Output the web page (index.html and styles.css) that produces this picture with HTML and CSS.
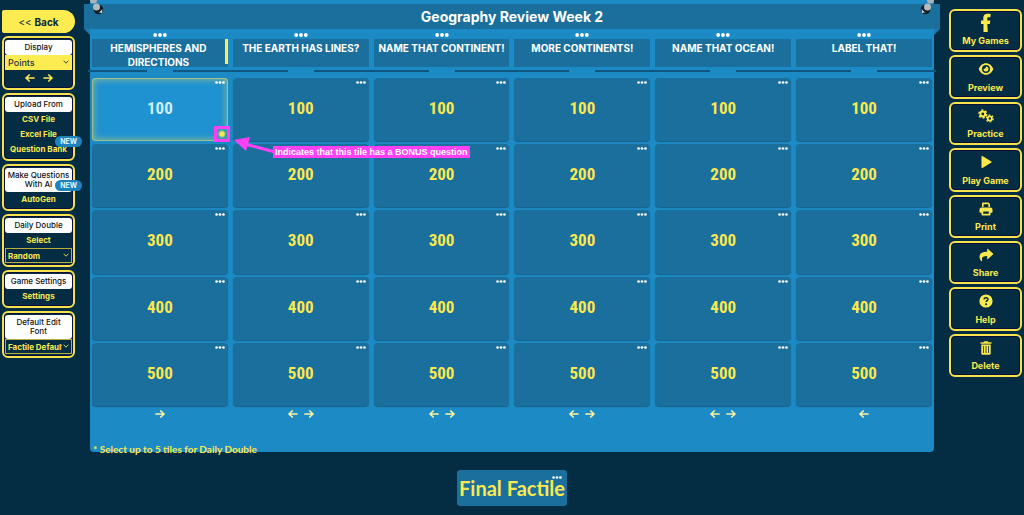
FILE: index.html
```html
<!DOCTYPE html>
<html lang="en">
<head>
<meta charset="utf-8">
<title>Geography Review Week 2</title>
<link rel="stylesheet" href="styles.css">
</head>
<body>
<svg class="defs" aria-hidden="true">
  <symbol id="right" viewBox="0 0 10 8"><path d="M1 4h8M5.800 1 9 4 5.800 7" fill="none" stroke="currentColor" stroke-width="1.700" stroke-linecap="round" stroke-linejoin="round"/></symbol>
  <symbol id="left" viewBox="0 0 10 8"><path d="M9 4H1M4.200 1 1 4l3.200 3" fill="none" stroke="currentColor" stroke-width="1.700" stroke-linecap="round" stroke-linejoin="round"/></symbol>
  <symbol id="chev" viewBox="0 0 6 4"><path d="M.6.7 3 3.200 5.400.7" fill="none" stroke="currentColor" stroke-width=".9"/></symbol>
  <symbol id="dots" viewBox="0 0 14 4"><circle cx="2.200" cy="2" r="1.900"/><circle cx="7" cy="2" r="1.900"/><circle cx="11.800" cy="2" r="1.900"/></symbol>
  <symbol id="bolt" viewBox="0 0 14 16"><circle cx="8.500" cy="9.500" r="4.800" fill="#111d24"/><path d="M9 12.500l3.500-3.500-.5 4z" fill="#c9ced0"/><circle cx="3.500" cy="0" r="3.600" fill="#a9b3b8"/><circle cx="6.500" cy="7" r="3.500" fill="#b2bbbf"/></symbol>
</svg>
<div class="app">
  <aside class="side">
    <button class="back">&lt;&lt; <b>Back</b></button>
    <section class="panel">
      <label class="head" for="display">Display</label>
      <div class="pick pick-solid"><select id="display"><option>Points</option></select><svg class="chev"><use href="#chev"/></svg></div>
      <div class="moves"><button aria-label="Back one"><svg class="arrow"><use href="#left"/></svg></button><button aria-label="Forward one"><svg class="arrow"><use href="#right"/></svg></button></div>
    </section>
    <section class="panel">
      <h2 class="head">Upload From</h2>
      <a class="item" href="#">CSV File</a>
      <a class="item" href="#">Excel File</a>
      <a class="item" href="#">Question Bank<span class="new">NEW</span></a>
    </section>
    <section class="panel">
      <h2 class="head">Make Questions<br>With AI<span class="new">NEW</span></h2>
      <a class="item" href="#">AutoGen</a>
    </section>
    <section class="panel">
      <label class="head" for="daily">Daily Double</label>
      <a class="item" href="#">Select</a>
      <div class="pick"><select id="daily"><option>Random</option></select><svg class="chev"><use href="#chev"/></svg></div>
    </section>
    <section class="panel">
      <h2 class="head">Game Settings</h2>
      <a class="item" href="#">Settings</a>
    </section>
    <section class="panel">
      <label class="head" for="font">Default Edit<br>Font</label>
      <div class="pick"><select id="font"><option>Factile Default</option></select><svg class="chev"><use href="#chev"/></svg></div>
    </section>
  </aside>

  <main class="main">
    <div class="board">
      <header class="title">
        <svg class="bolt bolt-l"><use href="#bolt"/></svg>
        <h1>Geography Review Week 2</h1>
        <svg class="bolt bolt-r"><use href="#bolt"/></svg>
      </header>
      <div class="cols cats">
        <div class="cat"><svg class="dots"><use href="#dots"/></svg><h3 class="mark">HEMISPHERES AND DIRECTIONS</h3></div>
        <div class="cat"><svg class="dots"><use href="#dots"/></svg><h3>THE EARTH HAS LINES?</h3></div>
        <div class="cat"><svg class="dots"><use href="#dots"/></svg><h3>NAME THAT CONTINENT!</h3></div>
        <div class="cat"><svg class="dots"><use href="#dots"/></svg><h3>MORE CONTINENTS!</h3></div>
        <div class="cat"><svg class="dots"><use href="#dots"/></svg><h3>NAME THAT OCEAN!</h3></div>
        <div class="cat"><svg class="dots"><use href="#dots"/></svg><h3>LABEL THAT!</h3></div>
      </div>
      <div class="cols rail"><i></i><i></i><i></i><i></i><i></i><i></i></div>
      <div class="cols tiles">
        <div class="cell">
          <button class="tile lit">100<svg class="more"><use href="#dots"/></svg></button>
          <span class="bonus"></span>
          <svg class="pointer" viewBox="0 0 44 18"><path d="M12 7 42 15" stroke="#ff40f5" stroke-width="3"/><path d="M1 3 17 0 13 14z" fill="#ff40f5"/></svg>
          <span class="hint">Indicates that this tile has a BONUS question</span>
        </div>
        <button class="tile">100<svg class="more"><use href="#dots"/></svg></button>
        <button class="tile">100<svg class="more"><use href="#dots"/></svg></button>
        <button class="tile">100<svg class="more"><use href="#dots"/></svg></button>
        <button class="tile">100<svg class="more"><use href="#dots"/></svg></button>
        <button class="tile">100<svg class="more"><use href="#dots"/></svg></button>
        <button class="tile">200<svg class="more"><use href="#dots"/></svg></button>
        <button class="tile">200<svg class="more"><use href="#dots"/></svg></button>
        <button class="tile">200<svg class="more"><use href="#dots"/></svg></button>
        <button class="tile">200<svg class="more"><use href="#dots"/></svg></button>
        <button class="tile">200<svg class="more"><use href="#dots"/></svg></button>
        <button class="tile">200<svg class="more"><use href="#dots"/></svg></button>
        <button class="tile">300<svg class="more"><use href="#dots"/></svg></button>
        <button class="tile">300<svg class="more"><use href="#dots"/></svg></button>
        <button class="tile">300<svg class="more"><use href="#dots"/></svg></button>
        <button class="tile">300<svg class="more"><use href="#dots"/></svg></button>
        <button class="tile">300<svg class="more"><use href="#dots"/></svg></button>
        <button class="tile">300<svg class="more"><use href="#dots"/></svg></button>
        <button class="tile">400<svg class="more"><use href="#dots"/></svg></button>
        <button class="tile">400<svg class="more"><use href="#dots"/></svg></button>
        <button class="tile">400<svg class="more"><use href="#dots"/></svg></button>
        <button class="tile">400<svg class="more"><use href="#dots"/></svg></button>
        <button class="tile">400<svg class="more"><use href="#dots"/></svg></button>
        <button class="tile">400<svg class="more"><use href="#dots"/></svg></button>
        <button class="tile">500<svg class="more"><use href="#dots"/></svg></button>
        <button class="tile">500<svg class="more"><use href="#dots"/></svg></button>
        <button class="tile">500<svg class="more"><use href="#dots"/></svg></button>
        <button class="tile">500<svg class="more"><use href="#dots"/></svg></button>
        <button class="tile">500<svg class="more"><use href="#dots"/></svg></button>
        <button class="tile">500<svg class="more"><use href="#dots"/></svg></button>
      </div>
      <div class="cols shift">
        <div class="moves"><button aria-label="Move right"><svg class="arrow"><use href="#right"/></svg></button></div>
        <div class="moves"><button aria-label="Move left"><svg class="arrow"><use href="#left"/></svg></button><button aria-label="Move right"><svg class="arrow"><use href="#right"/></svg></button></div>
        <div class="moves"><button aria-label="Move left"><svg class="arrow"><use href="#left"/></svg></button><button aria-label="Move right"><svg class="arrow"><use href="#right"/></svg></button></div>
        <div class="moves"><button aria-label="Move left"><svg class="arrow"><use href="#left"/></svg></button><button aria-label="Move right"><svg class="arrow"><use href="#right"/></svg></button></div>
        <div class="moves"><button aria-label="Move left"><svg class="arrow"><use href="#left"/></svg></button><button aria-label="Move right"><svg class="arrow"><use href="#right"/></svg></button></div>
        <div class="moves"><button aria-label="Move left"><svg class="arrow"><use href="#left"/></svg></button></div>
      </div>
    </div>
    <p class="note">* Select up to 5 tiles for Daily Double</p>
    <button class="final">Final Factile<svg class="more"><use href="#dots"/></svg></button>
  </main>

  <nav class="tools">
    <button class="tool"><svg class="fb" viewBox="0 0 12 20"><path d="M3.500 19V11H1V7.500h2.300V5C3.300 2 5 .8 7.400.8c1.200 0 2.600.1 3.300.3l-.4 3.200H8.600c-1 0-1.300.5-1.300 1.300v1.900h3L9.900 11H7.300l.5 8z"/></svg>My Games</button>
    <button class="tool"><svg viewBox="0 0 16 14"><path fill-rule="evenodd" d="M8 1.200C4.500 1.200 2 3.600.7 7c1.300 3.400 3.800 5.800 7.300 5.800s6-2.400 7.300-5.800C14 3.600 11.500 1.200 8 1.200zM8 3a4 4 0 1 1 0 8 4 4 0 0 1 0-8zm0 1.500c0 1.500-1 2.500-2.500 2.500A2.500 2.500 0 1 0 8 4.500z"/></svg>Preview</button>
    <button class="tool"><svg viewBox="0 0 16 14"><g fill="none" stroke="currentColor"><circle cx="4.800" cy="5" r="2.400" stroke-width="2"/><circle cx="4.800" cy="5" r="3.900" stroke-width="1.500" stroke-dasharray="2.100 1.980"/><circle cx="11.800" cy="9.500" r="2.100" stroke-width="1.800"/><circle cx="11.800" cy="9.500" r="3.400" stroke-width="1.300" stroke-dasharray="1.800 1.760"/></g></svg>Practice</button>
    <button class="tool"><svg viewBox="0 0 16 14"><path d="M3.500 1.500v11q0 .9.900.4l9-5.300q.7-.6 0-1.200l-9-5.300q-.9-.5-.9.400z"/></svg>Play Game</button>
    <button class="tool"><svg viewBox="0 0 16 14"><path fill-rule="evenodd" d="M4 1.500Q4 .5 5 .5h5.500L12 2v3h-1.600V2.300H5.600V5H4zM3.500 5.500h9q2 0 2 2V10q0 .7-.7.7H12.500V12.500q0 1-1 1h-7q-1 0-1-1V10.700H2.200q-.7 0-.7-.7V7.500q0-2 2-2zM5.200 9.500v2.300h5.600V9.500z"/></svg>Print</button>
    <button class="tool"><svg viewBox="0 0 16 14"><path d="M9.200 1.200v2.600C4.500 3.800 1.500 5.300 1.500 9c0 1.800 1 3.400 2 4.200.5.300.9 0 .7-.5C3.300 9.300 5 8.100 9.200 8.100v2.700q.1.800.8.3l5-4.600q.4-.5 0-.9L10 .9q-.7-.5-.8.300z"/></svg>Share</button>
    <button class="tool"><svg viewBox="0 0 16 14"><circle cx="8" cy="7" r="6.600"/><path d="M5.900 5.400Q6.200 3.700 8 3.700t2 1.500c0 1.500-1.900 1.500-1.900 2.900" fill="none" stroke="#042c42" stroke-width="1.500"/><circle cx="8.100" cy="10.300" r="1" fill="#042c42"/></svg>Help</button>
    <button class="tool"><svg viewBox="0 0 16 14"><path fill-rule="evenodd" d="M2.500 1.200h3L6.200.3h3.600l.7.9h3v1.500h-11zM3.300 3.400h9.400V12.500q0 1.300-1.300 1.300H4.600q-1.300 0-1.300-1.300zM5.100 5v7h.8V5zm2.500 0v7h.8V5zm2.500 0v7h.8V5z"/></svg>Delete</button>
  </nav>
</div>
</body>
</html>
```
FILE: styles.css
```css
* { box-sizing: border-box; }
body {
  margin: 0;
  min-height: 100vh;
  background: #042c42;
  color: #fbe84f;
  font-family: Inter, "Open Sans", sans-serif;
  font-size: 9px;
}
button, select { font: inherit; color: inherit; margin: 0; }
button { padding: 0; border: 0; background: none; cursor: pointer; }
h1, h2, h3, p { margin: 0; }
a { color: inherit; text-decoration: none; }
svg { fill: currentColor; display: block; }
.defs { position: absolute; width: 0; height: 0; }

.app { display: flex; gap: 15px; padding: 0 2px; }
.side { flex: 0 0 73px; display: flex; flex-direction: column; gap: 3px; padding-top: 10px; }
.back {
  height: 23px;
  background: #fdeb52;
  color: #06273a;
  border-radius: 2px 12px 12px 2px;
  font-size: 10px;
}
.panel {
  border: 2px solid #f5e24d;
  border-radius: 6px;
  padding: 2px 1px;
  display: flex;
  flex-direction: column;
  text-align: center;
  box-shadow: inset 0 0 0 1px #0b1038;
}
.head {
  position: relative;
  background: #fff;
  color: #111;
  border-radius: 3px;
  font-size: 8px;
  font-weight: 500;
  line-height: 9px;
  padding: 3px 0;
}
.item { position: relative; line-height: 15px; font-weight: 700; font-size: 8px; }
.new {
  position: absolute;
  right: -10px;
  bottom: 1px;
  background: #1c83bd;
  color: #e9f6fd;
  border-radius: 6px;
  padding: 0 5px;
  font-size: 7px;
  font-weight: 700;
  line-height: 11px;
}
.item .new { bottom: 10px; }
.pick { position: relative; height: 15px; border: 1px solid #b9ad3c; font-weight: 700; font-size: 8px; }
.pick-solid { background: #fdeb52; color: #1d3440; border-color: #fdeb52; font-weight: 500; font-size: 9px; }
.pick select {
  display: block;
  appearance: none;
  width: 100%;
  height: 100%;
  border: 0;
  padding: 0 9px 0 2px;
  background: none;
}
.chev { position: absolute; right: 2px; top: 4px; width: 6px; height: 4px; }
.moves { display: flex; justify-content: center; align-items: center; gap: 8px; height: 16px; }
.shift .moves { gap: 6px; }
.arrow { width: 10px; height: 8px; }

.main { flex: 1; min-width: 0; display: flex; flex-direction: column; }
.board { background: #1c8ac4; border-radius: 0 0 4px 4px; padding: 4px 2px 30px; }
.title {
  position: relative;
  margin: 0 -8px;
  background: #1a6f9d;
  color: #fff;
  text-align: center;
}
.title h1 { font-size: 14px; line-height: 25px; font-weight: 700; }
.title::before, .title::after {
  content: "";
  position: absolute;
  top: 100%;
  width: 6px;
  height: 6px;
  background: #1b79ad;
}
.title::before { left: 0; clip-path: polygon(0 0, 100% 0, 100% 100%); }
.title::after { right: 0; clip-path: polygon(0 0, 100% 0, 0 100%); }
.bolt { position: absolute; top: -4px; width: 14px; height: 16px; }
.bolt-l { left: 6px; }
.bolt-r { right: 6px; transform: scaleX(-1); }

.cols { display: grid; grid-template-columns: repeat(6, minmax(0, 1fr)); gap: 3px 5px; }
.cats { padding-top: 4px; color: #fff; }
.cat { display: flex; flex-direction: column; align-items: center; gap: 2px; }
.dots { width: 14px; height: 4px; }
.cat h3 {
  width: 100%;
  height: 28px;
  padding: 2px 0 0;
  background: #1a6f9d;
  font-size: 10px;
  line-height: 14px;
  font-weight: 700;
  text-align: center;
}
.cat .mark { padding: 2px 15px 0 12px; background: linear-gradient(#fdeb52, #fdeb52) right top / 3px 25px no-repeat #1a6f9d; }
.rail { margin: 3px -4px 6px; padding: 0 4px; height: 2px; background: #0f5680; }
.rail i { justify-self: center; width: 26px; height: 2px; background: #1c8ac4; }
.tiles { grid-auto-rows: 1fr; min-height: 328px; }
.cell { position: relative; display: grid; }
.tile {
  position: relative;
  padding-bottom: 3px;
  background: #1a6f9d;
  border-radius: 4px;
  box-shadow: 0 1px 1px #17618a;
  font-family: "Liberation Sans Narrow", "Roboto Condensed", "DejaVu Sans Condensed", sans-serif;
  font-size: 17px;
  font-weight: 700;
}
.lit { background: #1f92d1; color: #cfeefb; box-shadow: inset 0 0 0 1px #9bc28a, inset 0 0 6px 2px #7db59b; }
.more { position: absolute; top: 3px; right: 3px; width: 10px; height: 3px; color: #fff; }
.bonus {
  position: absolute;
  right: -2px;
  bottom: -1px;
  width: 16px;
  height: 16px;
  border: 3px solid #ff40f5;
  background: radial-gradient(circle, #f4e94f 2px, #3a9db0 4px);
}
.pointer { position: absolute; z-index: 1; left: 141px; top: 59px; width: 44px; height: 18px; }
.hint {
  position: absolute;
  z-index: 1;
  left: 181px;
  top: 68px;
  padding: 0 2px;
  background: #ff40f5;
  color: #fff;
  font-family: "Liberation Sans", Arial, sans-serif;
  font-weight: 700;
  font-size: 9px;
  line-height: 12px;
  white-space: nowrap;
}
.shift { color: #fdf2a0; }
.note { margin: -10px 0 0 3px; font-family: Lato, sans-serif; font-size: 10px; line-height: 14px; font-weight: 700; }
.final {
  position: relative;
  align-self: center;
  margin-top: 14px;
  padding: 0 2px;
  background: #1a6f9d;
  border-radius: 3px;
  font-family: Lato, sans-serif;
  font-size: 20px;
  line-height: 36px;
  font-weight: 700;
}
.final .more { top: 6px; right: 5px; }

.tools { flex: 0 0 73px; display: grid; grid-auto-rows: 1fr; align-self: flex-start; gap: 3px; min-height: 368px; margin-top: 9px; }
.tool {
  display: flex;
  flex-direction: column;
  align-items: center;
  justify-content: space-between;
  border: 2px solid #f5e24d;
  border-radius: 6px;
  padding: 5px 0 3px;
  box-shadow: inset 0 0 0 1px #0b1038;
  font-weight: 700;
  line-height: 12px;
}
.tool svg { width: 16px; height: 14px; }
.tool .fb { width: 12px; height: 20px; margin-top: -3px; }
```
